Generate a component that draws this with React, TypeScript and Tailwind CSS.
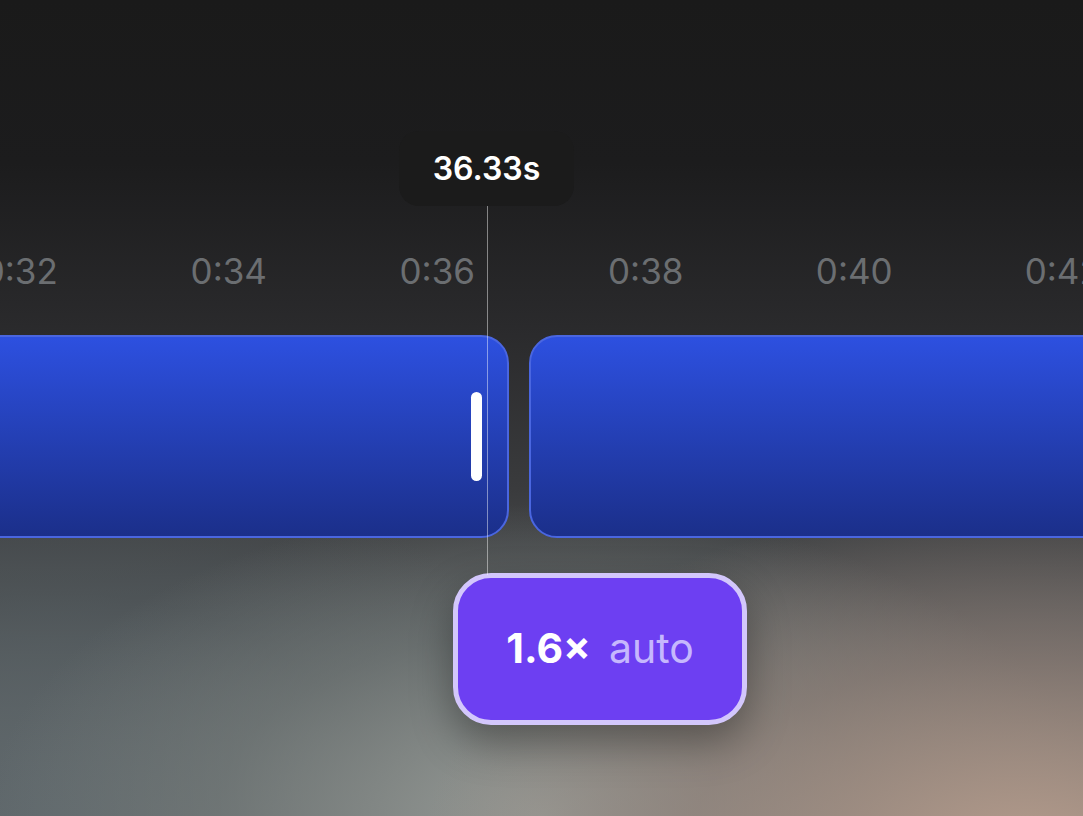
const ticks = ["0:32", "0:34", "0:36", "0:38", "0:40", "0:42"];

export default function App() {
  return (
    <div
      className="relative h-[816px] w-full overflow-hidden bg-[#1b1b1c] text-white"
      style={{ fontFamily: "Inter, 'Noto Sans', sans-serif" }}
    >
      {/* background wash */}
      <div className="absolute inset-0 bg-[radial-gradient(ellipse_70%_55%_at_95%_105%,#b59c8c_0%,rgba(150,130,120,0.6)_45%,transparent_80%),radial-gradient(ellipse_60%_45%_at_50%_100%,#969a96_0%,rgba(120,126,124,0.6)_50%,transparent_85%),radial-gradient(ellipse_55%_50%_at_5%_100%,#5f686c_0%,rgba(80,88,92,0.5)_55%,transparent_90%),linear-gradient(to_bottom,#1a1a1a_0%,#1c1c1d_20%,#2a2a2c_40%,#3a3b3d_60%,#555a5c_80%,#707474_100%)]" />

      <div className="relative flex flex-col pt-[131px]">
        {/* playhead time */}
        <div className="ml-[399px] flex h-[75px] w-[175px] items-center justify-center rounded-[20px] bg-[#1b1b1b] text-[32px] font-semibold">
          36.33s
        </div>

        {/* ruler */}
        <div className="mt-[44px] ml-[-84px] flex text-[35px] leading-[42px] text-[#6b6e71]">
          {ticks.map((t) => (
            <div key={t} className="w-[208.5px] shrink-0 text-center">
              {t}
            </div>
          ))}
        </div>

        {/* clips */}
        <div className="mt-[43px] ml-[-91px] flex h-[203px] gap-[20px]">
          <div className="flex w-[600px] shrink-0 items-center justify-end rounded-[28px] border-2 border-[#4a66e0] bg-[linear-gradient(to_bottom,#2d50e0,#1b2f8a)] pr-[25px]">
            <div className="h-[89px] w-[11px] rounded-full bg-white" />
          </div>
          <div className="w-[700px] shrink-0 rounded-[28px] border-2 border-[#4a66e0] bg-[linear-gradient(to_bottom,#2d50e0,#1b2f8a)]" />
        </div>

        {/* speed pill */}
        <div className="mt-[35px] ml-[453px] flex h-[152px] w-[294px] items-center justify-center gap-[18px] rounded-[38px] border-[5px] border-[#d3c7fc] bg-[#6d3ff2] text-[41px] shadow-[0_18px_40px_rgba(0,0,0,0.35)]">
          <span className="font-bold text-white">1.6×</span>
          <span className="text-[#c6b7fd]">auto</span>
        </div>
      </div>

      {/* playhead line */}
      <div className="absolute left-[487px] top-[206px] h-[369px] w-px bg-white/45" />
    </div>
  );
}
